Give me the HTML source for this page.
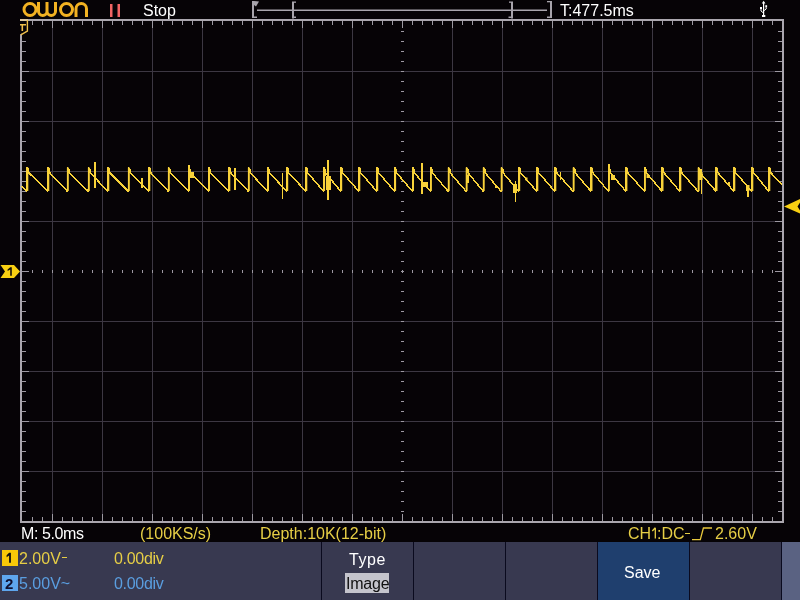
<!DOCTYPE html>
<html><head><meta charset="utf-8">
<style>
html,body{margin:0;padding:0;}
body{width:800px;height:600px;overflow:hidden;background:#060306;position:relative;font-family:"Liberation Sans",sans-serif;}
.t{position:absolute;white-space:nowrap;font-size:16px;line-height:16px;will-change:transform;}
svg{position:absolute;left:0;top:0;}
#panel{position:absolute;left:0;top:542px;width:800px;height:58px;background:#383950;}
</style></head><body>
<svg width="800" height="600" viewBox="0 0 800 600" shape-rendering="crispEdges">
<rect x="52" y="21" width="1" height="500" fill="#3c3742"/>
<rect x="102" y="21" width="1" height="500" fill="#3c3742"/>
<rect x="152" y="21" width="1" height="500" fill="#3c3742"/>
<rect x="202" y="21" width="1" height="500" fill="#3c3742"/>
<rect x="252" y="21" width="1" height="500" fill="#3c3742"/>
<rect x="302" y="21" width="1" height="500" fill="#3c3742"/>
<rect x="352" y="21" width="1" height="500" fill="#3c3742"/>
<rect x="452" y="21" width="1" height="500" fill="#3c3742"/>
<rect x="502" y="21" width="1" height="500" fill="#3c3742"/>
<rect x="552" y="21" width="1" height="500" fill="#3c3742"/>
<rect x="602" y="21" width="1" height="500" fill="#3c3742"/>
<rect x="652" y="21" width="1" height="500" fill="#3c3742"/>
<rect x="702" y="21" width="1" height="500" fill="#3c3742"/>
<rect x="752" y="21" width="1" height="500" fill="#3c3742"/>
<rect x="22" y="71" width="760" height="1" fill="#3c3742"/>
<rect x="22" y="121" width="760" height="1" fill="#3c3742"/>
<rect x="22" y="171" width="760" height="1" fill="#3c3742"/>
<rect x="22" y="221" width="760" height="1" fill="#3c3742"/>
<rect x="22" y="321" width="760" height="1" fill="#3c3742"/>
<rect x="22" y="371" width="760" height="1" fill="#3c3742"/>
<rect x="22" y="421" width="760" height="1" fill="#3c3742"/>
<rect x="22" y="471" width="760" height="1" fill="#3c3742"/>
<rect x="401" y="31" width="3" height="1" fill="#9d99a2"/>
<rect x="401" y="41" width="3" height="1" fill="#9d99a2"/>
<rect x="401" y="51" width="3" height="1" fill="#9d99a2"/>
<rect x="401" y="61" width="3" height="1" fill="#9d99a2"/>
<rect x="401" y="71" width="3" height="1" fill="#9d99a2"/>
<rect x="401" y="81" width="3" height="1" fill="#9d99a2"/>
<rect x="401" y="91" width="3" height="1" fill="#9d99a2"/>
<rect x="401" y="101" width="3" height="1" fill="#9d99a2"/>
<rect x="401" y="111" width="3" height="1" fill="#9d99a2"/>
<rect x="401" y="121" width="3" height="1" fill="#9d99a2"/>
<rect x="401" y="131" width="3" height="1" fill="#9d99a2"/>
<rect x="401" y="141" width="3" height="1" fill="#9d99a2"/>
<rect x="401" y="151" width="3" height="1" fill="#9d99a2"/>
<rect x="401" y="161" width="3" height="1" fill="#9d99a2"/>
<rect x="401" y="171" width="3" height="1" fill="#9d99a2"/>
<rect x="401" y="181" width="3" height="1" fill="#9d99a2"/>
<rect x="401" y="191" width="3" height="1" fill="#9d99a2"/>
<rect x="401" y="201" width="3" height="1" fill="#9d99a2"/>
<rect x="401" y="211" width="3" height="1" fill="#9d99a2"/>
<rect x="401" y="221" width="3" height="1" fill="#9d99a2"/>
<rect x="401" y="231" width="3" height="1" fill="#9d99a2"/>
<rect x="401" y="241" width="3" height="1" fill="#9d99a2"/>
<rect x="401" y="251" width="3" height="1" fill="#9d99a2"/>
<rect x="401" y="261" width="3" height="1" fill="#9d99a2"/>
<rect x="401" y="281" width="3" height="1" fill="#9d99a2"/>
<rect x="401" y="291" width="3" height="1" fill="#9d99a2"/>
<rect x="401" y="301" width="3" height="1" fill="#9d99a2"/>
<rect x="401" y="311" width="3" height="1" fill="#9d99a2"/>
<rect x="401" y="321" width="3" height="1" fill="#9d99a2"/>
<rect x="401" y="331" width="3" height="1" fill="#9d99a2"/>
<rect x="401" y="341" width="3" height="1" fill="#9d99a2"/>
<rect x="401" y="351" width="3" height="1" fill="#9d99a2"/>
<rect x="401" y="361" width="3" height="1" fill="#9d99a2"/>
<rect x="401" y="371" width="3" height="1" fill="#9d99a2"/>
<rect x="401" y="381" width="3" height="1" fill="#9d99a2"/>
<rect x="401" y="391" width="3" height="1" fill="#9d99a2"/>
<rect x="401" y="401" width="3" height="1" fill="#9d99a2"/>
<rect x="401" y="411" width="3" height="1" fill="#9d99a2"/>
<rect x="401" y="421" width="3" height="1" fill="#9d99a2"/>
<rect x="401" y="431" width="3" height="1" fill="#9d99a2"/>
<rect x="401" y="441" width="3" height="1" fill="#9d99a2"/>
<rect x="401" y="451" width="3" height="1" fill="#9d99a2"/>
<rect x="401" y="461" width="3" height="1" fill="#9d99a2"/>
<rect x="401" y="471" width="3" height="1" fill="#9d99a2"/>
<rect x="401" y="481" width="3" height="1" fill="#9d99a2"/>
<rect x="401" y="491" width="3" height="1" fill="#9d99a2"/>
<rect x="401" y="501" width="3" height="1" fill="#9d99a2"/>
<rect x="401" y="511" width="3" height="1" fill="#9d99a2"/>
<rect x="32" y="270" width="1" height="3" fill="#9d99a2"/>
<rect x="42" y="270" width="1" height="3" fill="#9d99a2"/>
<rect x="52" y="270" width="1" height="3" fill="#9d99a2"/>
<rect x="62" y="270" width="1" height="3" fill="#9d99a2"/>
<rect x="72" y="270" width="1" height="3" fill="#9d99a2"/>
<rect x="82" y="270" width="1" height="3" fill="#9d99a2"/>
<rect x="92" y="270" width="1" height="3" fill="#9d99a2"/>
<rect x="102" y="270" width="1" height="3" fill="#9d99a2"/>
<rect x="112" y="270" width="1" height="3" fill="#9d99a2"/>
<rect x="122" y="270" width="1" height="3" fill="#9d99a2"/>
<rect x="132" y="270" width="1" height="3" fill="#9d99a2"/>
<rect x="142" y="270" width="1" height="3" fill="#9d99a2"/>
<rect x="152" y="270" width="1" height="3" fill="#9d99a2"/>
<rect x="162" y="270" width="1" height="3" fill="#9d99a2"/>
<rect x="172" y="270" width="1" height="3" fill="#9d99a2"/>
<rect x="182" y="270" width="1" height="3" fill="#9d99a2"/>
<rect x="192" y="270" width="1" height="3" fill="#9d99a2"/>
<rect x="202" y="270" width="1" height="3" fill="#9d99a2"/>
<rect x="212" y="270" width="1" height="3" fill="#9d99a2"/>
<rect x="222" y="270" width="1" height="3" fill="#9d99a2"/>
<rect x="232" y="270" width="1" height="3" fill="#9d99a2"/>
<rect x="242" y="270" width="1" height="3" fill="#9d99a2"/>
<rect x="252" y="270" width="1" height="3" fill="#9d99a2"/>
<rect x="262" y="270" width="1" height="3" fill="#9d99a2"/>
<rect x="272" y="270" width="1" height="3" fill="#9d99a2"/>
<rect x="282" y="270" width="1" height="3" fill="#9d99a2"/>
<rect x="292" y="270" width="1" height="3" fill="#9d99a2"/>
<rect x="302" y="270" width="1" height="3" fill="#9d99a2"/>
<rect x="312" y="270" width="1" height="3" fill="#9d99a2"/>
<rect x="322" y="270" width="1" height="3" fill="#9d99a2"/>
<rect x="332" y="270" width="1" height="3" fill="#9d99a2"/>
<rect x="342" y="270" width="1" height="3" fill="#9d99a2"/>
<rect x="352" y="270" width="1" height="3" fill="#9d99a2"/>
<rect x="362" y="270" width="1" height="3" fill="#9d99a2"/>
<rect x="372" y="270" width="1" height="3" fill="#9d99a2"/>
<rect x="382" y="270" width="1" height="3" fill="#9d99a2"/>
<rect x="392" y="270" width="1" height="3" fill="#9d99a2"/>
<rect x="412" y="270" width="1" height="3" fill="#9d99a2"/>
<rect x="422" y="270" width="1" height="3" fill="#9d99a2"/>
<rect x="432" y="270" width="1" height="3" fill="#9d99a2"/>
<rect x="442" y="270" width="1" height="3" fill="#9d99a2"/>
<rect x="452" y="270" width="1" height="3" fill="#9d99a2"/>
<rect x="462" y="270" width="1" height="3" fill="#9d99a2"/>
<rect x="472" y="270" width="1" height="3" fill="#9d99a2"/>
<rect x="482" y="270" width="1" height="3" fill="#9d99a2"/>
<rect x="492" y="270" width="1" height="3" fill="#9d99a2"/>
<rect x="502" y="270" width="1" height="3" fill="#9d99a2"/>
<rect x="512" y="270" width="1" height="3" fill="#9d99a2"/>
<rect x="522" y="270" width="1" height="3" fill="#9d99a2"/>
<rect x="532" y="270" width="1" height="3" fill="#9d99a2"/>
<rect x="542" y="270" width="1" height="3" fill="#9d99a2"/>
<rect x="552" y="270" width="1" height="3" fill="#9d99a2"/>
<rect x="562" y="270" width="1" height="3" fill="#9d99a2"/>
<rect x="572" y="270" width="1" height="3" fill="#9d99a2"/>
<rect x="582" y="270" width="1" height="3" fill="#9d99a2"/>
<rect x="592" y="270" width="1" height="3" fill="#9d99a2"/>
<rect x="602" y="270" width="1" height="3" fill="#9d99a2"/>
<rect x="612" y="270" width="1" height="3" fill="#9d99a2"/>
<rect x="622" y="270" width="1" height="3" fill="#9d99a2"/>
<rect x="632" y="270" width="1" height="3" fill="#9d99a2"/>
<rect x="642" y="270" width="1" height="3" fill="#9d99a2"/>
<rect x="652" y="270" width="1" height="3" fill="#9d99a2"/>
<rect x="662" y="270" width="1" height="3" fill="#9d99a2"/>
<rect x="672" y="270" width="1" height="3" fill="#9d99a2"/>
<rect x="682" y="270" width="1" height="3" fill="#9d99a2"/>
<rect x="692" y="270" width="1" height="3" fill="#9d99a2"/>
<rect x="702" y="270" width="1" height="3" fill="#9d99a2"/>
<rect x="712" y="270" width="1" height="3" fill="#9d99a2"/>
<rect x="722" y="270" width="1" height="3" fill="#9d99a2"/>
<rect x="732" y="270" width="1" height="3" fill="#9d99a2"/>
<rect x="742" y="270" width="1" height="3" fill="#9d99a2"/>
<rect x="752" y="270" width="1" height="3" fill="#9d99a2"/>
<rect x="762" y="270" width="1" height="3" fill="#9d99a2"/>
<rect x="772" y="270" width="1" height="3" fill="#9d99a2"/>
<rect x="401" y="271" width="3" height="1" fill="#9d99a2"/><rect x="402" y="270" width="1" height="3" fill="#9d99a2"/>
<rect x="32" y="21" width="1" height="4" fill="#9d99a2"/>
<rect x="32" y="517" width="1" height="4" fill="#9d99a2"/>
<rect x="42" y="21" width="1" height="4" fill="#9d99a2"/>
<rect x="42" y="517" width="1" height="4" fill="#9d99a2"/>
<rect x="52" y="21" width="1" height="7" fill="#9d99a2"/>
<rect x="52" y="514" width="1" height="7" fill="#9d99a2"/>
<rect x="62" y="21" width="1" height="4" fill="#9d99a2"/>
<rect x="62" y="517" width="1" height="4" fill="#9d99a2"/>
<rect x="72" y="21" width="1" height="4" fill="#9d99a2"/>
<rect x="72" y="517" width="1" height="4" fill="#9d99a2"/>
<rect x="82" y="21" width="1" height="4" fill="#9d99a2"/>
<rect x="82" y="517" width="1" height="4" fill="#9d99a2"/>
<rect x="92" y="21" width="1" height="4" fill="#9d99a2"/>
<rect x="92" y="517" width="1" height="4" fill="#9d99a2"/>
<rect x="102" y="21" width="1" height="7" fill="#9d99a2"/>
<rect x="102" y="514" width="1" height="7" fill="#9d99a2"/>
<rect x="112" y="21" width="1" height="4" fill="#9d99a2"/>
<rect x="112" y="517" width="1" height="4" fill="#9d99a2"/>
<rect x="122" y="21" width="1" height="4" fill="#9d99a2"/>
<rect x="122" y="517" width="1" height="4" fill="#9d99a2"/>
<rect x="132" y="21" width="1" height="4" fill="#9d99a2"/>
<rect x="132" y="517" width="1" height="4" fill="#9d99a2"/>
<rect x="142" y="21" width="1" height="4" fill="#9d99a2"/>
<rect x="142" y="517" width="1" height="4" fill="#9d99a2"/>
<rect x="152" y="21" width="1" height="7" fill="#9d99a2"/>
<rect x="152" y="514" width="1" height="7" fill="#9d99a2"/>
<rect x="162" y="21" width="1" height="4" fill="#9d99a2"/>
<rect x="162" y="517" width="1" height="4" fill="#9d99a2"/>
<rect x="172" y="21" width="1" height="4" fill="#9d99a2"/>
<rect x="172" y="517" width="1" height="4" fill="#9d99a2"/>
<rect x="182" y="21" width="1" height="4" fill="#9d99a2"/>
<rect x="182" y="517" width="1" height="4" fill="#9d99a2"/>
<rect x="192" y="21" width="1" height="4" fill="#9d99a2"/>
<rect x="192" y="517" width="1" height="4" fill="#9d99a2"/>
<rect x="202" y="21" width="1" height="7" fill="#9d99a2"/>
<rect x="202" y="514" width="1" height="7" fill="#9d99a2"/>
<rect x="212" y="21" width="1" height="4" fill="#9d99a2"/>
<rect x="212" y="517" width="1" height="4" fill="#9d99a2"/>
<rect x="222" y="21" width="1" height="4" fill="#9d99a2"/>
<rect x="222" y="517" width="1" height="4" fill="#9d99a2"/>
<rect x="232" y="21" width="1" height="4" fill="#9d99a2"/>
<rect x="232" y="517" width="1" height="4" fill="#9d99a2"/>
<rect x="242" y="21" width="1" height="4" fill="#9d99a2"/>
<rect x="242" y="517" width="1" height="4" fill="#9d99a2"/>
<rect x="252" y="21" width="1" height="7" fill="#9d99a2"/>
<rect x="252" y="514" width="1" height="7" fill="#9d99a2"/>
<rect x="262" y="21" width="1" height="4" fill="#9d99a2"/>
<rect x="262" y="517" width="1" height="4" fill="#9d99a2"/>
<rect x="272" y="21" width="1" height="4" fill="#9d99a2"/>
<rect x="272" y="517" width="1" height="4" fill="#9d99a2"/>
<rect x="282" y="21" width="1" height="4" fill="#9d99a2"/>
<rect x="282" y="517" width="1" height="4" fill="#9d99a2"/>
<rect x="292" y="21" width="1" height="4" fill="#9d99a2"/>
<rect x="292" y="517" width="1" height="4" fill="#9d99a2"/>
<rect x="302" y="21" width="1" height="7" fill="#9d99a2"/>
<rect x="302" y="514" width="1" height="7" fill="#9d99a2"/>
<rect x="312" y="21" width="1" height="4" fill="#9d99a2"/>
<rect x="312" y="517" width="1" height="4" fill="#9d99a2"/>
<rect x="322" y="21" width="1" height="4" fill="#9d99a2"/>
<rect x="322" y="517" width="1" height="4" fill="#9d99a2"/>
<rect x="332" y="21" width="1" height="4" fill="#9d99a2"/>
<rect x="332" y="517" width="1" height="4" fill="#9d99a2"/>
<rect x="342" y="21" width="1" height="4" fill="#9d99a2"/>
<rect x="342" y="517" width="1" height="4" fill="#9d99a2"/>
<rect x="352" y="21" width="1" height="7" fill="#9d99a2"/>
<rect x="352" y="514" width="1" height="7" fill="#9d99a2"/>
<rect x="362" y="21" width="1" height="4" fill="#9d99a2"/>
<rect x="362" y="517" width="1" height="4" fill="#9d99a2"/>
<rect x="372" y="21" width="1" height="4" fill="#9d99a2"/>
<rect x="372" y="517" width="1" height="4" fill="#9d99a2"/>
<rect x="382" y="21" width="1" height="4" fill="#9d99a2"/>
<rect x="382" y="517" width="1" height="4" fill="#9d99a2"/>
<rect x="392" y="21" width="1" height="4" fill="#9d99a2"/>
<rect x="392" y="517" width="1" height="4" fill="#9d99a2"/>
<rect x="402" y="21" width="1" height="7" fill="#9d99a2"/>
<rect x="402" y="514" width="1" height="7" fill="#9d99a2"/>
<rect x="412" y="21" width="1" height="4" fill="#9d99a2"/>
<rect x="412" y="517" width="1" height="4" fill="#9d99a2"/>
<rect x="422" y="21" width="1" height="4" fill="#9d99a2"/>
<rect x="422" y="517" width="1" height="4" fill="#9d99a2"/>
<rect x="432" y="21" width="1" height="4" fill="#9d99a2"/>
<rect x="432" y="517" width="1" height="4" fill="#9d99a2"/>
<rect x="442" y="21" width="1" height="4" fill="#9d99a2"/>
<rect x="442" y="517" width="1" height="4" fill="#9d99a2"/>
<rect x="452" y="21" width="1" height="7" fill="#9d99a2"/>
<rect x="452" y="514" width="1" height="7" fill="#9d99a2"/>
<rect x="462" y="21" width="1" height="4" fill="#9d99a2"/>
<rect x="462" y="517" width="1" height="4" fill="#9d99a2"/>
<rect x="472" y="21" width="1" height="4" fill="#9d99a2"/>
<rect x="472" y="517" width="1" height="4" fill="#9d99a2"/>
<rect x="482" y="21" width="1" height="4" fill="#9d99a2"/>
<rect x="482" y="517" width="1" height="4" fill="#9d99a2"/>
<rect x="492" y="21" width="1" height="4" fill="#9d99a2"/>
<rect x="492" y="517" width="1" height="4" fill="#9d99a2"/>
<rect x="502" y="21" width="1" height="7" fill="#9d99a2"/>
<rect x="502" y="514" width="1" height="7" fill="#9d99a2"/>
<rect x="512" y="21" width="1" height="4" fill="#9d99a2"/>
<rect x="512" y="517" width="1" height="4" fill="#9d99a2"/>
<rect x="522" y="21" width="1" height="4" fill="#9d99a2"/>
<rect x="522" y="517" width="1" height="4" fill="#9d99a2"/>
<rect x="532" y="21" width="1" height="4" fill="#9d99a2"/>
<rect x="532" y="517" width="1" height="4" fill="#9d99a2"/>
<rect x="542" y="21" width="1" height="4" fill="#9d99a2"/>
<rect x="542" y="517" width="1" height="4" fill="#9d99a2"/>
<rect x="552" y="21" width="1" height="7" fill="#9d99a2"/>
<rect x="552" y="514" width="1" height="7" fill="#9d99a2"/>
<rect x="562" y="21" width="1" height="4" fill="#9d99a2"/>
<rect x="562" y="517" width="1" height="4" fill="#9d99a2"/>
<rect x="572" y="21" width="1" height="4" fill="#9d99a2"/>
<rect x="572" y="517" width="1" height="4" fill="#9d99a2"/>
<rect x="582" y="21" width="1" height="4" fill="#9d99a2"/>
<rect x="582" y="517" width="1" height="4" fill="#9d99a2"/>
<rect x="592" y="21" width="1" height="4" fill="#9d99a2"/>
<rect x="592" y="517" width="1" height="4" fill="#9d99a2"/>
<rect x="602" y="21" width="1" height="7" fill="#9d99a2"/>
<rect x="602" y="514" width="1" height="7" fill="#9d99a2"/>
<rect x="612" y="21" width="1" height="4" fill="#9d99a2"/>
<rect x="612" y="517" width="1" height="4" fill="#9d99a2"/>
<rect x="622" y="21" width="1" height="4" fill="#9d99a2"/>
<rect x="622" y="517" width="1" height="4" fill="#9d99a2"/>
<rect x="632" y="21" width="1" height="4" fill="#9d99a2"/>
<rect x="632" y="517" width="1" height="4" fill="#9d99a2"/>
<rect x="642" y="21" width="1" height="4" fill="#9d99a2"/>
<rect x="642" y="517" width="1" height="4" fill="#9d99a2"/>
<rect x="652" y="21" width="1" height="7" fill="#9d99a2"/>
<rect x="652" y="514" width="1" height="7" fill="#9d99a2"/>
<rect x="662" y="21" width="1" height="4" fill="#9d99a2"/>
<rect x="662" y="517" width="1" height="4" fill="#9d99a2"/>
<rect x="672" y="21" width="1" height="4" fill="#9d99a2"/>
<rect x="672" y="517" width="1" height="4" fill="#9d99a2"/>
<rect x="682" y="21" width="1" height="4" fill="#9d99a2"/>
<rect x="682" y="517" width="1" height="4" fill="#9d99a2"/>
<rect x="692" y="21" width="1" height="4" fill="#9d99a2"/>
<rect x="692" y="517" width="1" height="4" fill="#9d99a2"/>
<rect x="702" y="21" width="1" height="7" fill="#9d99a2"/>
<rect x="702" y="514" width="1" height="7" fill="#9d99a2"/>
<rect x="712" y="21" width="1" height="4" fill="#9d99a2"/>
<rect x="712" y="517" width="1" height="4" fill="#9d99a2"/>
<rect x="722" y="21" width="1" height="4" fill="#9d99a2"/>
<rect x="722" y="517" width="1" height="4" fill="#9d99a2"/>
<rect x="732" y="21" width="1" height="4" fill="#9d99a2"/>
<rect x="732" y="517" width="1" height="4" fill="#9d99a2"/>
<rect x="742" y="21" width="1" height="4" fill="#9d99a2"/>
<rect x="742" y="517" width="1" height="4" fill="#9d99a2"/>
<rect x="752" y="21" width="1" height="7" fill="#9d99a2"/>
<rect x="752" y="514" width="1" height="7" fill="#9d99a2"/>
<rect x="762" y="21" width="1" height="4" fill="#9d99a2"/>
<rect x="762" y="517" width="1" height="4" fill="#9d99a2"/>
<rect x="772" y="21" width="1" height="4" fill="#9d99a2"/>
<rect x="772" y="517" width="1" height="4" fill="#9d99a2"/>
<rect x="22" y="31" width="4" height="1" fill="#9d99a2"/>
<rect x="778" y="31" width="4" height="1" fill="#9d99a2"/>
<rect x="22" y="41" width="4" height="1" fill="#9d99a2"/>
<rect x="778" y="41" width="4" height="1" fill="#9d99a2"/>
<rect x="22" y="51" width="4" height="1" fill="#9d99a2"/>
<rect x="778" y="51" width="4" height="1" fill="#9d99a2"/>
<rect x="22" y="61" width="4" height="1" fill="#9d99a2"/>
<rect x="778" y="61" width="4" height="1" fill="#9d99a2"/>
<rect x="22" y="71" width="7" height="1" fill="#9d99a2"/>
<rect x="775" y="71" width="7" height="1" fill="#9d99a2"/>
<rect x="22" y="81" width="4" height="1" fill="#9d99a2"/>
<rect x="778" y="81" width="4" height="1" fill="#9d99a2"/>
<rect x="22" y="91" width="4" height="1" fill="#9d99a2"/>
<rect x="778" y="91" width="4" height="1" fill="#9d99a2"/>
<rect x="22" y="101" width="4" height="1" fill="#9d99a2"/>
<rect x="778" y="101" width="4" height="1" fill="#9d99a2"/>
<rect x="22" y="111" width="4" height="1" fill="#9d99a2"/>
<rect x="778" y="111" width="4" height="1" fill="#9d99a2"/>
<rect x="22" y="121" width="7" height="1" fill="#9d99a2"/>
<rect x="775" y="121" width="7" height="1" fill="#9d99a2"/>
<rect x="22" y="131" width="4" height="1" fill="#9d99a2"/>
<rect x="778" y="131" width="4" height="1" fill="#9d99a2"/>
<rect x="22" y="141" width="4" height="1" fill="#9d99a2"/>
<rect x="778" y="141" width="4" height="1" fill="#9d99a2"/>
<rect x="22" y="151" width="4" height="1" fill="#9d99a2"/>
<rect x="778" y="151" width="4" height="1" fill="#9d99a2"/>
<rect x="22" y="161" width="4" height="1" fill="#9d99a2"/>
<rect x="778" y="161" width="4" height="1" fill="#9d99a2"/>
<rect x="22" y="171" width="7" height="1" fill="#9d99a2"/>
<rect x="775" y="171" width="7" height="1" fill="#9d99a2"/>
<rect x="22" y="181" width="4" height="1" fill="#9d99a2"/>
<rect x="778" y="181" width="4" height="1" fill="#9d99a2"/>
<rect x="22" y="191" width="4" height="1" fill="#9d99a2"/>
<rect x="778" y="191" width="4" height="1" fill="#9d99a2"/>
<rect x="22" y="201" width="4" height="1" fill="#9d99a2"/>
<rect x="778" y="201" width="4" height="1" fill="#9d99a2"/>
<rect x="22" y="211" width="4" height="1" fill="#9d99a2"/>
<rect x="778" y="211" width="4" height="1" fill="#9d99a2"/>
<rect x="22" y="221" width="7" height="1" fill="#9d99a2"/>
<rect x="775" y="221" width="7" height="1" fill="#9d99a2"/>
<rect x="22" y="231" width="4" height="1" fill="#9d99a2"/>
<rect x="778" y="231" width="4" height="1" fill="#9d99a2"/>
<rect x="22" y="241" width="4" height="1" fill="#9d99a2"/>
<rect x="778" y="241" width="4" height="1" fill="#9d99a2"/>
<rect x="22" y="251" width="4" height="1" fill="#9d99a2"/>
<rect x="778" y="251" width="4" height="1" fill="#9d99a2"/>
<rect x="22" y="261" width="4" height="1" fill="#9d99a2"/>
<rect x="778" y="261" width="4" height="1" fill="#9d99a2"/>
<rect x="22" y="271" width="7" height="1" fill="#9d99a2"/>
<rect x="775" y="271" width="7" height="1" fill="#9d99a2"/>
<rect x="22" y="281" width="4" height="1" fill="#9d99a2"/>
<rect x="778" y="281" width="4" height="1" fill="#9d99a2"/>
<rect x="22" y="291" width="4" height="1" fill="#9d99a2"/>
<rect x="778" y="291" width="4" height="1" fill="#9d99a2"/>
<rect x="22" y="301" width="4" height="1" fill="#9d99a2"/>
<rect x="778" y="301" width="4" height="1" fill="#9d99a2"/>
<rect x="22" y="311" width="4" height="1" fill="#9d99a2"/>
<rect x="778" y="311" width="4" height="1" fill="#9d99a2"/>
<rect x="22" y="321" width="7" height="1" fill="#9d99a2"/>
<rect x="775" y="321" width="7" height="1" fill="#9d99a2"/>
<rect x="22" y="331" width="4" height="1" fill="#9d99a2"/>
<rect x="778" y="331" width="4" height="1" fill="#9d99a2"/>
<rect x="22" y="341" width="4" height="1" fill="#9d99a2"/>
<rect x="778" y="341" width="4" height="1" fill="#9d99a2"/>
<rect x="22" y="351" width="4" height="1" fill="#9d99a2"/>
<rect x="778" y="351" width="4" height="1" fill="#9d99a2"/>
<rect x="22" y="361" width="4" height="1" fill="#9d99a2"/>
<rect x="778" y="361" width="4" height="1" fill="#9d99a2"/>
<rect x="22" y="371" width="7" height="1" fill="#9d99a2"/>
<rect x="775" y="371" width="7" height="1" fill="#9d99a2"/>
<rect x="22" y="381" width="4" height="1" fill="#9d99a2"/>
<rect x="778" y="381" width="4" height="1" fill="#9d99a2"/>
<rect x="22" y="391" width="4" height="1" fill="#9d99a2"/>
<rect x="778" y="391" width="4" height="1" fill="#9d99a2"/>
<rect x="22" y="401" width="4" height="1" fill="#9d99a2"/>
<rect x="778" y="401" width="4" height="1" fill="#9d99a2"/>
<rect x="22" y="411" width="4" height="1" fill="#9d99a2"/>
<rect x="778" y="411" width="4" height="1" fill="#9d99a2"/>
<rect x="22" y="421" width="7" height="1" fill="#9d99a2"/>
<rect x="775" y="421" width="7" height="1" fill="#9d99a2"/>
<rect x="22" y="431" width="4" height="1" fill="#9d99a2"/>
<rect x="778" y="431" width="4" height="1" fill="#9d99a2"/>
<rect x="22" y="441" width="4" height="1" fill="#9d99a2"/>
<rect x="778" y="441" width="4" height="1" fill="#9d99a2"/>
<rect x="22" y="451" width="4" height="1" fill="#9d99a2"/>
<rect x="778" y="451" width="4" height="1" fill="#9d99a2"/>
<rect x="22" y="461" width="4" height="1" fill="#9d99a2"/>
<rect x="778" y="461" width="4" height="1" fill="#9d99a2"/>
<rect x="22" y="471" width="7" height="1" fill="#9d99a2"/>
<rect x="775" y="471" width="7" height="1" fill="#9d99a2"/>
<rect x="22" y="481" width="4" height="1" fill="#9d99a2"/>
<rect x="778" y="481" width="4" height="1" fill="#9d99a2"/>
<rect x="22" y="491" width="4" height="1" fill="#9d99a2"/>
<rect x="778" y="491" width="4" height="1" fill="#9d99a2"/>
<rect x="22" y="501" width="4" height="1" fill="#9d99a2"/>
<rect x="778" y="501" width="4" height="1" fill="#9d99a2"/>
<rect x="22" y="511" width="4" height="1" fill="#9d99a2"/>
<rect x="778" y="511" width="4" height="1" fill="#9d99a2"/>
<rect x="20" y="19" width="764" height="2" fill="#aaa6ae"/>
<rect x="20" y="521" width="764" height="2" fill="#aaa6ae"/>
<rect x="20" y="19" width="2" height="504" fill="#aaa6ae"/>
<rect x="782" y="19" width="2" height="504" fill="#aaa6ae"/>
<path d="M22.0,186.0 L26.0,191.0 L27.0,191.0 L27.0,167.5 L28.5,169.5 L28.5,172.5 L47.5,191.0 L48.0,191.0 L48.0,167.5 L49.5,169.5 L49.5,172.5 L67.0,191.0 L67.5,191.0 L67.5,167.5 L69.0,169.5 L69.0,172.5 L88.0,191.0 L88.5,191.0 L88.5,167.5 L90.0,169.5 L90.0,172.5 L107.5,191.0 L108.0,191.0 L108.0,167.5 L109.5,169.5 L109.5,172.5 L128.0,191.0 L128.5,191.0 L128.5,167.5 L130.0,169.5 L130.0,172.5 L148.5,191.0 L149.0,191.0 L149.0,167.5 L150.5,169.5 L150.5,172.5 L168.0,191.0 L168.5,191.0 L168.5,167.5 L170.0,169.5 L170.0,172.5 L188.2,191.0 L188.7,191.0 L188.7,167.5 L190.2,169.5 L190.2,172.5 L208.2,191.0 L208.7,191.0 L208.7,167.5 L210.2,169.5 L210.2,172.5 L228.5,191.0 L229.0,191.0 L229.0,167.5 L230.5,169.5 L230.5,172.5 L248.0,191.0 L248.5,191.0 L248.5,167.5 L250.0,169.5 L250.0,172.5 L267.2,191.0 L267.7,191.0 L267.7,167.5 L269.2,169.5 L269.2,172.5 L286.4,191.0 L286.9,191.0 L286.9,167.5 L288.4,169.5 L288.4,172.5 L305.5,191.0 L306.0,191.0 L306.0,167.5 L307.5,169.5 L307.5,172.5 L323.3,191.0 L323.8,191.0 L323.8,167.5 L325.3,169.5 L325.3,172.5 L340.4,191.0 L340.9,191.0 L340.9,167.5 L342.4,169.5 L342.4,172.5 L358.5,191.0 L359.0,191.0 L359.0,167.5 L360.5,169.5 L360.5,172.5 L376.4,191.0 L376.9,191.0 L376.9,167.5 L378.4,169.5 L378.4,172.5 L394.3,191.0 L394.8,191.0 L394.8,167.5 L396.3,169.5 L396.3,172.5 L412.2,191.0 L412.7,191.0 L412.7,167.5 L414.2,169.5 L414.2,172.5 L430.1,191.0 L430.6,191.0 L430.6,167.5 L432.1,169.5 L432.1,172.5 L447.9,191.0 L448.4,191.0 L448.4,167.5 L449.9,169.5 L449.9,172.5 L465.8,191.0 L466.3,191.0 L466.3,167.5 L467.8,169.5 L467.8,172.5 L482.9,191.0 L483.4,191.0 L483.4,167.5 L484.9,169.5 L484.9,172.5 L500.8,191.0 L501.3,191.0 L501.3,167.5 L502.8,169.5 L502.8,172.5 L518.4,191.0 L518.9,191.0 L518.9,167.5 L520.4,169.5 L520.4,172.5 L536.5,191.0 L537.0,191.0 L537.0,167.5 L538.5,169.5 L538.5,172.5 L554.5,191.0 L555.0,191.0 L555.0,167.5 L556.5,169.5 L556.5,172.5 L572.8,191.0 L573.3,191.0 L573.3,167.5 L574.8,169.5 L574.8,172.5 L590.7,191.0 L591.2,191.0 L591.2,167.5 L592.7,169.5 L592.7,172.5 L608.1,191.0 L608.6,191.0 L608.6,167.5 L610.1,169.5 L610.1,172.5 L625.6,191.0 L626.1,191.0 L626.1,167.5 L627.6,169.5 L627.6,172.5 L644.1,191.0 L644.6,191.0 L644.6,167.5 L646.1,169.5 L646.1,172.5 L661.7,191.0 L662.2,191.0 L662.2,167.5 L663.7,169.5 L663.7,172.5 L679.5,191.0 L680.0,191.0 L680.0,167.5 L681.5,169.5 L681.5,172.5 L697.8,191.0 L698.3,191.0 L698.3,167.5 L699.8,169.5 L699.8,172.5 L715.7,191.0 L716.2,191.0 L716.2,167.5 L717.7,169.5 L717.7,172.5 L733.5,191.0 L734.0,191.0 L734.0,167.5 L735.5,169.5 L735.5,172.5 L751.5,191.0 L752.0,191.0 L752.0,167.5 L753.5,169.5 L753.5,172.5 L768.5,191.0 L769.0,191.0 L769.0,167.5 L770.5,169.5 L770.5,172.5 L782.0,184.3" fill="none" stroke="#f8d23a" stroke-width="1.5" stroke-linejoin="bevel"/>
<rect x="26.40" y="167.5" width="1.9" height="23.5" fill="#f8d23a" shape-rendering="auto"/>
<rect x="47.40" y="167.5" width="1.9" height="23.5" fill="#f8d23a" shape-rendering="auto"/>
<rect x="66.90" y="167.5" width="1.9" height="23.5" fill="#f8d23a" shape-rendering="auto"/>
<rect x="87.90" y="167.5" width="1.9" height="23.5" fill="#f8d23a" shape-rendering="auto"/>
<rect x="107.40" y="167.5" width="1.9" height="23.5" fill="#f8d23a" shape-rendering="auto"/>
<rect x="127.90" y="167.5" width="1.9" height="23.5" fill="#f8d23a" shape-rendering="auto"/>
<rect x="148.40" y="167.5" width="1.9" height="23.5" fill="#f8d23a" shape-rendering="auto"/>
<rect x="167.90" y="167.5" width="1.9" height="23.5" fill="#f8d23a" shape-rendering="auto"/>
<rect x="188.10" y="167.5" width="1.9" height="23.5" fill="#f8d23a" shape-rendering="auto"/>
<rect x="208.10" y="167.5" width="1.9" height="23.5" fill="#f8d23a" shape-rendering="auto"/>
<rect x="228.40" y="167.5" width="1.9" height="23.5" fill="#f8d23a" shape-rendering="auto"/>
<rect x="247.90" y="167.5" width="1.9" height="23.5" fill="#f8d23a" shape-rendering="auto"/>
<rect x="267.10" y="167.5" width="1.9" height="23.5" fill="#f8d23a" shape-rendering="auto"/>
<rect x="286.30" y="167.5" width="1.9" height="23.5" fill="#f8d23a" shape-rendering="auto"/>
<rect x="305.40" y="167.5" width="1.9" height="23.5" fill="#f8d23a" shape-rendering="auto"/>
<rect x="323.20" y="167.5" width="1.9" height="23.5" fill="#f8d23a" shape-rendering="auto"/>
<rect x="340.30" y="167.5" width="1.9" height="23.5" fill="#f8d23a" shape-rendering="auto"/>
<rect x="358.40" y="167.5" width="1.9" height="23.5" fill="#f8d23a" shape-rendering="auto"/>
<rect x="376.30" y="167.5" width="1.9" height="23.5" fill="#f8d23a" shape-rendering="auto"/>
<rect x="394.20" y="167.5" width="1.9" height="23.5" fill="#f8d23a" shape-rendering="auto"/>
<rect x="412.10" y="167.5" width="1.9" height="23.5" fill="#f8d23a" shape-rendering="auto"/>
<rect x="430.00" y="167.5" width="1.9" height="23.5" fill="#f8d23a" shape-rendering="auto"/>
<rect x="447.80" y="167.5" width="1.9" height="23.5" fill="#f8d23a" shape-rendering="auto"/>
<rect x="465.70" y="167.5" width="1.9" height="23.5" fill="#f8d23a" shape-rendering="auto"/>
<rect x="482.80" y="167.5" width="1.9" height="23.5" fill="#f8d23a" shape-rendering="auto"/>
<rect x="500.70" y="167.5" width="1.9" height="23.5" fill="#f8d23a" shape-rendering="auto"/>
<rect x="518.30" y="167.5" width="1.9" height="23.5" fill="#f8d23a" shape-rendering="auto"/>
<rect x="536.40" y="167.5" width="1.9" height="23.5" fill="#f8d23a" shape-rendering="auto"/>
<rect x="554.40" y="167.5" width="1.9" height="23.5" fill="#f8d23a" shape-rendering="auto"/>
<rect x="572.70" y="167.5" width="1.9" height="23.5" fill="#f8d23a" shape-rendering="auto"/>
<rect x="590.60" y="167.5" width="1.9" height="23.5" fill="#f8d23a" shape-rendering="auto"/>
<rect x="608.00" y="167.5" width="1.9" height="23.5" fill="#f8d23a" shape-rendering="auto"/>
<rect x="625.50" y="167.5" width="1.9" height="23.5" fill="#f8d23a" shape-rendering="auto"/>
<rect x="644.00" y="167.5" width="1.9" height="23.5" fill="#f8d23a" shape-rendering="auto"/>
<rect x="661.60" y="167.5" width="1.9" height="23.5" fill="#f8d23a" shape-rendering="auto"/>
<rect x="679.40" y="167.5" width="1.9" height="23.5" fill="#f8d23a" shape-rendering="auto"/>
<rect x="697.70" y="167.5" width="1.9" height="23.5" fill="#f8d23a" shape-rendering="auto"/>
<rect x="715.60" y="167.5" width="1.9" height="23.5" fill="#f8d23a" shape-rendering="auto"/>
<rect x="733.40" y="167.5" width="1.9" height="23.5" fill="#f8d23a" shape-rendering="auto"/>
<rect x="751.40" y="167.5" width="1.9" height="23.5" fill="#f8d23a" shape-rendering="auto"/>
<rect x="768.40" y="167.5" width="1.9" height="23.5" fill="#f8d23a" shape-rendering="auto"/>
<rect x="94.40" y="162" width="1.4" height="26.00" fill="#f8d23a"/>
<rect x="141.40" y="178" width="1.4" height="10.00" fill="#f8d23a"/>
<rect x="188.40" y="164.5" width="1.4" height="13.50" fill="#f8d23a"/>
<rect x="234.40" y="168" width="1.4" height="22.00" fill="#f8d23a"/>
<rect x="281.65" y="173" width="1.4" height="26.00" fill="#f8d23a"/>
<rect x="327.40" y="160" width="1.4" height="40.00" fill="#f8d23a"/>
<rect x="421.30" y="162.5" width="1.4" height="31.50" fill="#f8d23a"/>
<rect x="467.40" y="175" width="1.4" height="8.00" fill="#f8d23a"/>
<rect x="514.65" y="181" width="1.4" height="21.00" fill="#f8d23a"/>
<rect x="560.00" y="172" width="1.4" height="8.00" fill="#f8d23a"/>
<rect x="608.40" y="164.4" width="1.4" height="15.60" fill="#f8d23a"/>
<rect x="700.65" y="168.75" width="1.4" height="25.25" fill="#f8d23a"/>
<rect x="747.40" y="185" width="1.4" height="11.50" fill="#f8d23a"/>
<rect x="190" y="172" width="4" height="6" fill="#f8d23a" shape-rendering="auto"/>
<rect x="326" y="176" width="5" height="14" fill="#f8d23a" shape-rendering="auto"/>
<rect x="423" y="182" width="5" height="5" fill="#f8d23a" shape-rendering="auto"/>
<rect x="513" y="184" width="4" height="9" fill="#f8d23a" shape-rendering="auto"/>
<rect x="525.5" y="177.5" width="2" height="3" fill="#f8d23a" shape-rendering="auto"/>
<rect x="611" y="175" width="4" height="5" fill="#f8d23a" shape-rendering="auto"/>
<rect x="646.5" y="174" width="2.5" height="4" fill="#f8d23a" shape-rendering="auto"/>
<rect x="698.5" y="172" width="4" height="8" fill="#f8d23a" shape-rendering="auto"/>
<rect x="728" y="182" width="2" height="4" fill="#f8d23a" shape-rendering="auto"/>
<rect x="746" y="185" width="3.5" height="6" fill="#f8d23a" shape-rendering="auto"/>
<rect x="324" y="170" width="2" height="6" fill="#f8d23a" shape-rendering="auto"/>
<rect x="495" y="186" width="2" height="2" fill="#f8d23a" shape-rendering="auto"/>
</svg>
<svg width="800" height="600" viewBox="0 0 800 600">
<!-- owon logo -->
<g fill="none" stroke="#f2b222" stroke-width="3">
<circle cx="30" cy="9.5" r="6"/>
<path d="M38.5,2 V11.25 A4.25,4.25 0 0 0 47,11.25 V2 M47,11.25 A4.25,4.25 0 0 0 55.5,11.25 V2"/>
<circle cx="66.5" cy="9.5" r="6"/>
<path d="M76,17 V8.75 A5.25,5.25 0 0 1 86.5,8.75 V17"/>
</g>
<rect x="110" y="4" width="2.5" height="13" fill="#f06464"/>
<rect x="117.5" y="4" width="2.5" height="13" fill="#f06464"/>
<!-- usb -->
<g fill="#fff">
<rect x="763" y="2" width="1.2" height="14"/>
<path d="M761.8,3.5 L763.6,0.8 L765.4,3.5 Z"/>
<rect x="760" y="7" width="2" height="2"/>
<rect x="765.3" y="5.2" width="1.8" height="2.2"/>
<rect x="762" y="15" width="3.3" height="2"/>
</g>
<g fill="none" stroke="#fff" stroke-width="1">
<path d="M761,9 V11 L763.5,13"/>
<path d="M766.2,7.4 V9 L763.5,11"/>
</g>
<!-- timeline brackets -->
<g fill="#a8a4ac">
<rect x="252" y="1" width="2" height="17"/><path d="M254,1 L259,1.5 L256,6.5 L254,5 Z"/><rect x="254" y="16.5" width="3" height="1.5"/>
<rect x="257" y="9.5" width="290" height="1.5"/>
<rect x="292" y="1.5" width="2" height="17"/><rect x="294" y="1.5" width="2" height="1.3"/><rect x="294" y="16.5" width="2" height="1.5"/>
<rect x="511" y="1.5" width="2" height="17"/><rect x="509" y="1.5" width="2" height="1.3"/><rect x="508.5" y="16.5" width="2.5" height="1.5"/>
<rect x="550" y="1" width="2" height="17"/><rect x="547" y="1" width="3" height="1.3"/><rect x="547" y="16.5" width="3" height="1.5"/>
</g>
<!-- trigger T marker -->
<path d="M20,21 H27 V31 L20,34.5 Z" fill="#060306"/><rect x="20" y="19" width="8" height="2" fill="#dcc8a0"/><path d="M27.4,20 V31 L20.8,34.8" fill="none" stroke="#f0c04a" stroke-width="1.4"/>
<rect x="20" y="24" width="6" height="1.5" fill="#f0c04a"/><rect x="21.5" y="24" width="1.6" height="7" fill="#f0c04a"/>
<!-- ch1 marker -->
<path d="M0.5,265 H14 L20,271.5 L14,278 H0.5 L5,271.5 Z" fill="#f8d012"/>
<path d="M10.2,267.2 H11.8 V275.8 H10.2 V269.6 L7.6,271 V269.4 Z" fill="#141008"/>
<!-- right trigger level marker -->
<path d="M784,206.5 L800,199 V202.5 L797.5,206.5 L800,210.5 V213.5 Z" fill="#f8d012"/>
<path d="M655.3,527.8 V538.6 M652.3,531 L655.3,527.8" fill="none" stroke="#e6ce46" stroke-width="1.3"/>
<!-- trigger edge symbol -->
<path d="M692,539.6 H700.3 L703.4,528 H712" fill="none" stroke="#e8c83c" stroke-width="1.3"/>
</svg>
<div class="t" style="left:143px;top:3px;color:#fff;">Stop</div>
<div class="t" style="left:560px;top:3px;color:#fff;">T:477.5ms</div>
<div class="t" style="left:21px;top:525.5px;color:#fff;letter-spacing:-0.4px">M: 5.0ms</div>
<div class="t" style="left:140px;top:525.5px;color:#e6ce46;">(100KS/s)</div>
<div class="t" style="left:260px;top:525.5px;color:#e6ce46;">Depth:10K(12-bit)</div>
<div class="t" style="left:628px;top:525.5px;color:#e6ce46;">CH</div>
<div class="t" style="left:656.5px;top:525.5px;color:#e6ce46;">:DC</div>
<div style="position:absolute;left:685px;top:532.6px;width:5px;height:1.3px;background:#e6ce46"></div>
<div class="t" style="left:715px;top:525.5px;color:#e6ce46;">2.60V</div>
<div id="panel"></div>
<div style="position:absolute;left:321px;top:542px;width:1px;height:58px;background:#0a0a1e"></div>
<div style="position:absolute;left:413px;top:542px;width:1px;height:58px;background:#0a0a1e"></div>
<div style="position:absolute;left:505px;top:542px;width:1px;height:58px;background:#0a0a1e"></div>
<div style="position:absolute;left:597px;top:542px;width:1px;height:58px;background:#0a0a1e"></div>
<div style="position:absolute;left:598px;top:542px;width:91px;height:58px;background:#1f3f6e"></div>
<div style="position:absolute;left:689px;top:542px;width:1px;height:58px;background:#0a0a1e"></div>
<div style="position:absolute;left:781px;top:542px;width:1px;height:58px;background:#0a0a1e"></div>
<div style="position:absolute;left:782px;top:542px;width:18px;height:58px;background:#5a6282"></div>
<div style="position:absolute;left:2px;top:550px;width:16px;height:16px;background:#f8c808"></div>
<div style="position:absolute;left:2px;top:575px;width:16px;height:16px;background:#5ea6ee"></div>
<svg width="800" height="600" style="position:absolute;left:0;top:0"><path d="M9.1,552.8 H10.9 V562.8 H9.1 V555.6 L6.6,557.2 V555.3 Z" fill="#101010"/></svg>
<div class="t" style="left:5px;top:576px;color:#101030;font-weight:bold;font-size:15px;">2</div>
<div class="t" style="left:19px;top:551px;color:#e6ce46;">2.00V</div>
<div style="position:absolute;left:62px;top:556.6px;width:5px;height:1.3px;background:#e6ce46"></div>
<div class="t" style="left:19px;top:576px;color:#5a9ee0;">5.00V~</div>
<div class="t" style="left:114px;top:551px;color:#e6ce46;letter-spacing:-0.3px">0.00div</div>
<div class="t" style="left:114px;top:576px;color:#5a9ee0;letter-spacing:-0.3px">0.00div</div>
<div class="t" style="left:349px;top:552px;color:#fff;letter-spacing:0.6px">Type</div>
<div style="position:absolute;left:345px;top:573px;width:44px;height:20px;background:#c4c4cc"></div>
<div class="t" style="left:346px;top:576px;color:#101010;letter-spacing:-0.2px">Image</div>
<div class="t" style="left:624px;top:565px;color:#fff;">Save</div>
</body></html>
